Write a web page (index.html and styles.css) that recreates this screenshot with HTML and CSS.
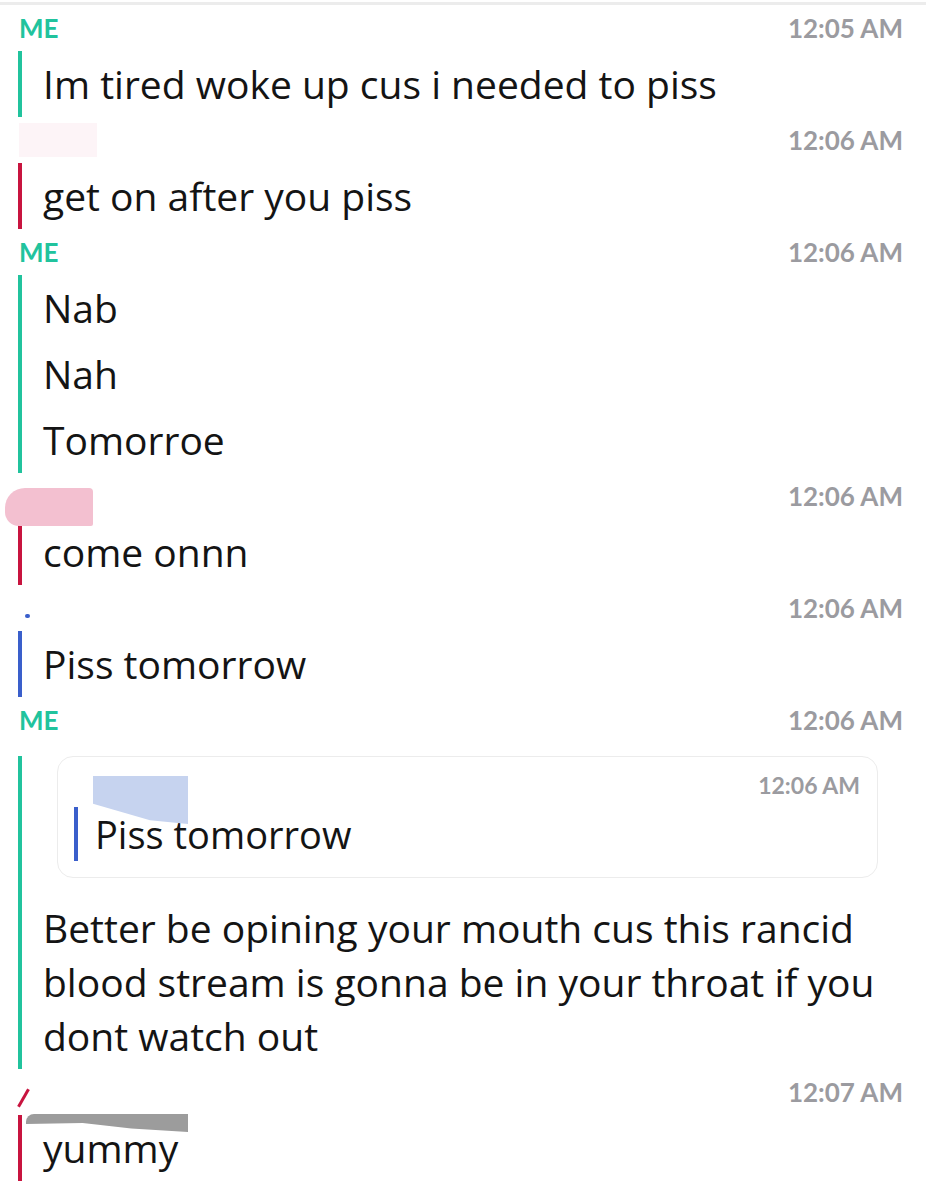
FILE: index.html
```html
<!DOCTYPE html>
<html lang="en">
<head>
  <meta charset="UTF-8" />
  <title>Chat</title>
  <link rel="stylesheet" href="styles.css">
</head>
<body>

  <div class="chat">

    <div class="group me">
      <div class="head"><span class="name">ME</span><span class="time">12:05 AM</span></div>
      <div class="body">
        <div class="msg">Im tired woke up cus i needed to piss</div>
      </div>
    </div>

    <div class="group red">
      <div class="head"><span class="name"><span class="smudge faint"></span></span><span class="time">12:06 AM</span></div>
      <div class="body">
        <div class="msg">get on after you piss</div>
      </div>
    </div>

    <div class="group me">
      <div class="head"><span class="name">ME</span><span class="time">12:06 AM</span></div>
      <div class="body">
        <div class="msg">Nab</div>
        <div class="msg">Nah</div>
        <div class="msg">Tomorroe</div>
      </div>
    </div>

    <div class="group red">
      <div class="head"><span class="name"><span class="smudge pink"></span></span><span class="time">12:06 AM</span></div>
      <div class="body">
        <div class="msg">come onnn</div>
      </div>
    </div>

    <div class="group blue">
      <div class="head"><span class="name"><span class="smudge dot"></span></span><span class="time">12:06 AM</span></div>
      <div class="body">
        <div class="msg">Piss tomorrow</div>
      </div>
    </div>

    <div class="group me">
      <div class="head"><span class="name">ME</span><span class="time">12:06 AM</span></div>
      <div class="body">
        <div class="quote blue">
          <div class="head"><span class="name"><span class="smudge sky"></span></span><span class="time">12:06 AM</span></div>
          <div class="body">
            <div class="msg">Piss tomorrow</div>
          </div>
        </div>
        <div class="msg">Better be opining your mouth cus this rancid blood stream is gonna be in your throat if you dont watch out</div>
      </div>
    </div>

    <div class="group red">
      <div class="head"><span class="name"><span class="smudge tick"></span><span class="smudge grey"></span></span><span class="time">12:07 AM</span></div>
      <div class="body">
        <div class="msg">yummy</div>
      </div>
    </div>

  </div>

</body>
</html>
```

FILE: styles.css
```css
body { margin: 0; background: #fff; color: #141414; font-family: Lato, "Noto Sans", sans-serif; }

.chat { margin-top: 2px; border-top: 3px solid #ececec; }

.group { margin-top: 5px; }
.group .head {
  display: flex;
  justify-content: space-between;
  align-items: center;
  height: 36px;
  line-height: 36px;
  padding: 0 23px 0 19px;
  font-size: 26px;
  font-weight: 700;
}
.group > .head { margin-bottom: 5px; }
.time { color: #9b9ba0; }

.body { border-left: 4px solid #ccc; margin-left: 18px; }
.msg {
  font-family: "Open Sans", Lato, sans-serif;
  font-size: 39px;
  line-height: 54px;
  padding: 6px 30px 6px 21px;
}

.me .name { color: #21c39d; }
.me > .body { border-color: #21c39d; }
.red > .body { border-color: #c8143f; }
.blue > .body { border-color: #3a5fcb; }

/* quoted message card */
.quote {
  margin: 18px 48px 17px 35px;
  border: 1px solid #ececec;
  border-radius: 16px;
  padding: 12px 17px 16px 16px;
}
.quote .head { padding: 0; height: 32px; line-height: 32px; font-size: 23px; margin-bottom: 6px; }
.quote .body { margin-left: 0; }
.quote .msg { padding: 0 0 0 17px; font-size: 38px; }

/* redacted names */
.name { display: inline-flex; align-items: flex-start; height: 100%; }
.smudge { display: inline-block; }
.smudge.faint { width: 78px; height: 34px; background: #fdf4f7; margin-top: 1px; }
.smudge.pink { width: 88px; height: 38px; background: #f3c0d0; border-radius: 20px 4px 2px 14px; margin-left: -14px; margin-top: 10px; }
.smudge.dot { width: 5px; height: 4px; background: #3a5fcb; border-radius: 2px; margin: 24px 0 0 6px; }
.smudge.sky {
  width: 95px; height: 48px; background: #c6d3ef;
  margin-left: 19px; margin-top: 7px;
  clip-path: polygon(0 0, 100% 0, 100% 100%, 60% 92%, 0 58%);
}
.smudge.tick { width: 3px; height: 20px; background: #c8143f; transform: rotate(30deg); margin: 14px 0 0 3px; }
.smudge.grey {
  width: 162px; height: 18px; background: #9c9c9c;
  margin-left: 1px; margin-top: 40px;
  border-top-left-radius: 8px;
  clip-path: polygon(0 0, 100% 0, 100% 100%, 65% 80%, 35% 50%, 0 55%);
}
```
